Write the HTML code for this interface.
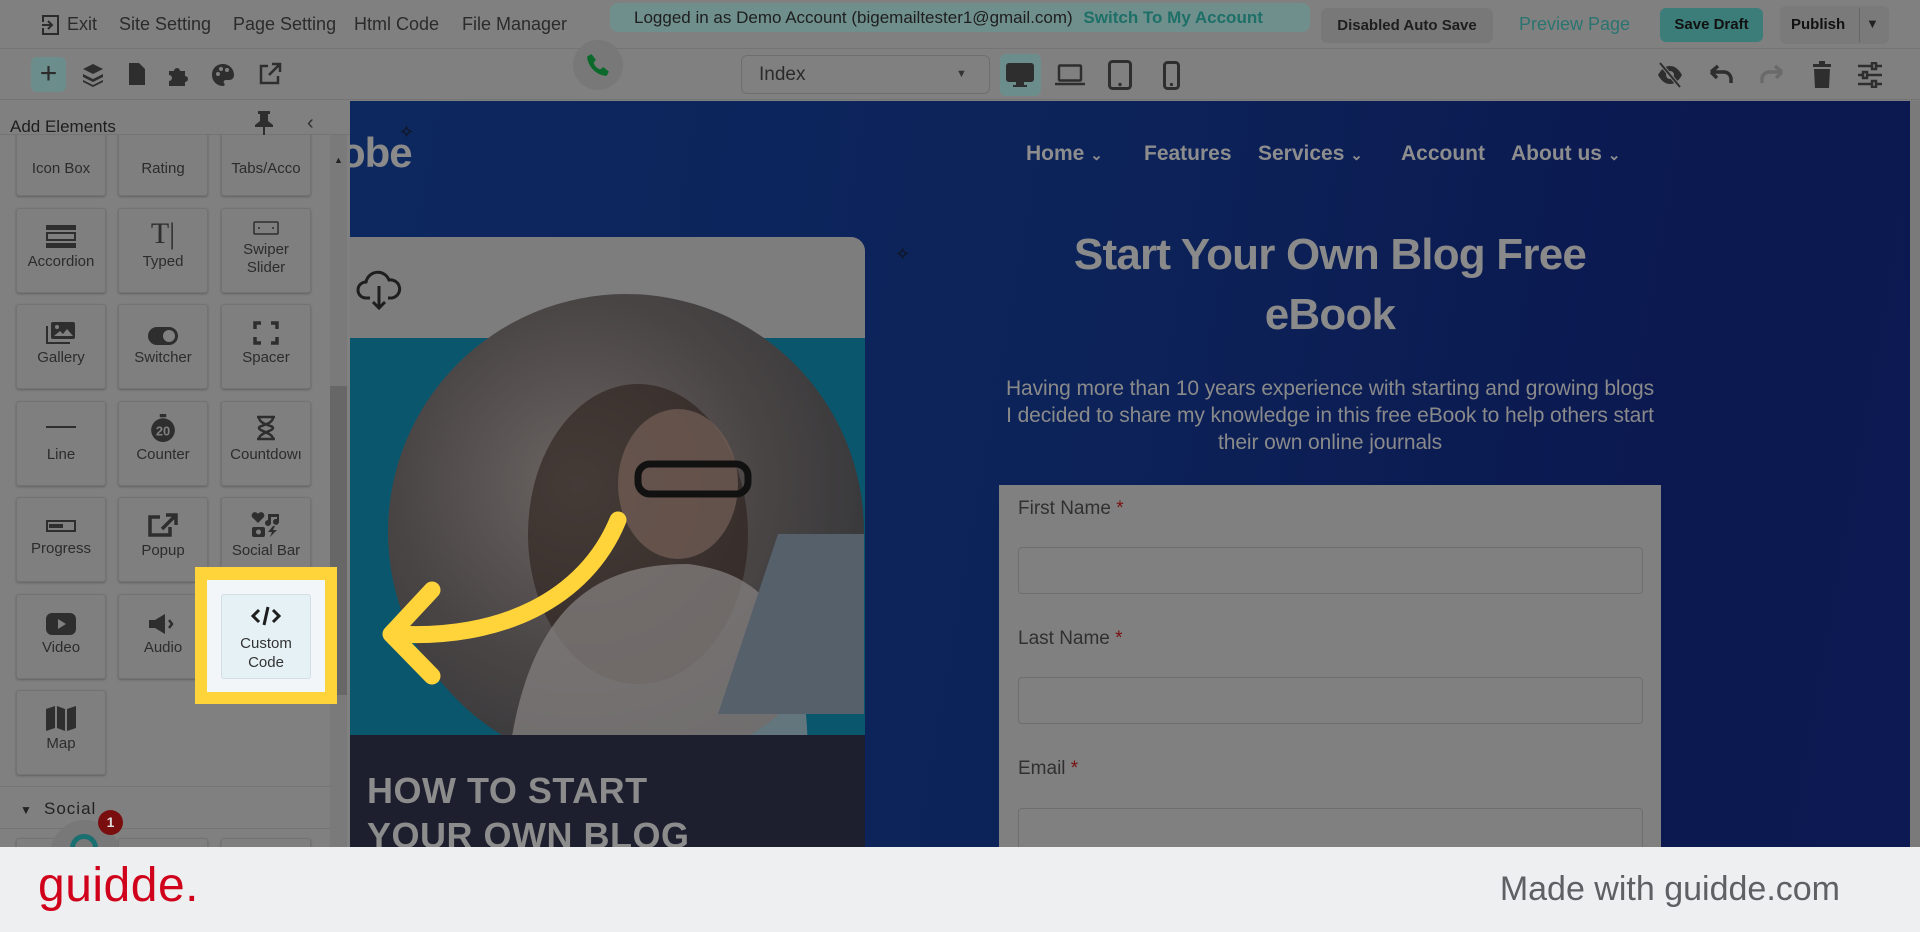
<!DOCTYPE html>
<html><head><meta charset="utf-8">
<style>
*{box-sizing:border-box;margin:0;padding:0}
body{width:1920px;height:932px;overflow:hidden;background:#808080;font-family:"Liberation Sans",sans-serif;position:relative}
.a{position:absolute}
.tb{color:#2b2b2b;font-size:18px;top:14px}
.tile{position:absolute;width:90px;height:85px;background:#7f7f7f;border:1px solid #737373;border-radius:3px;box-shadow:0 1px 2px rgba(0,0,0,.25);color:#2c2c2c;font-size:15px;text-align:center;line-height:18px}
.tile .ic{height:40px;display:flex;align-items:flex-end;justify-content:center;margin-bottom:4px}
.nav{top:142px;color:#8d8d8d;font-weight:bold;font-size:21px}
.lbl{color:#303030;font-size:19px;left:1018px}
.lbl b{color:#7a1010;font-weight:normal}
.inp{left:1018px;width:625px;height:47px;border:1px solid #6e6e6e;border-radius:4px}
</style></head><body>
<!-- top bar -->
<div class="a" style="left:0;top:0;width:1920px;height:49px;background:#808080;border-bottom:1px solid #747474"></div>
<svg class="a" style="left:41px;top:14px" width="20" height="22" viewBox="0 0 20 22"><path d="M2 8V2h15v18H2v-6M1 11h10M7 7l4 4-4 4" fill="none" stroke="#2b2b2b" stroke-width="2"/></svg>
<div class="a tb" style="left:67px">Exit</div>
<div class="a tb" style="left:119px">Site Setting</div>
<div class="a tb" style="left:233px">Page Setting</div>
<div class="a tb" style="left:354px">Html Code</div>
<div class="a tb" style="left:462px">File Manager</div>
<div class="a" style="left:610px;top:3px;width:700px;height:29px;background:#6f8f8c;border-radius:8px"></div>
<div class="a" style="left:634px;top:8px;font-size:17px;color:#1e1e1e">Logged in as Demo Account (bigemailtester1@gmail.com) <span style="color:#1d6f67;font-weight:bold;margin-left:6px">Switch To My Account</span></div>
<div class="a" style="left:1321px;top:8px;width:172px;height:35px;background:#787878;border-radius:6px;font-size:15px;font-weight:bold;color:#1e1e1e;text-align:center;line-height:35px">Disabled Auto Save</div>
<div class="a" style="left:1519px;top:14px;font-size:18px;color:#2a7470">Preview Page</div>
<div class="a" style="left:1660px;top:8px;width:103px;height:34px;background:#3c7d79;border-radius:6px;font-size:15px;font-weight:bold;color:#111;text-align:center;line-height:34px">Save Draft</div>
<div class="a" style="left:1780px;top:6px;width:109px;height:38px;background:#7a7a7a;border-radius:6px"></div>
<div class="a" style="left:1791px;top:16px;font-size:15px;font-weight:bold;color:#111">Publish</div>
<div class="a" style="left:1859px;top:8px;width:1px;height:34px;background:#666"></div>
<div class="a" style="left:1866px;top:16px;font-size:13px;color:#222">▼</div>
<!-- second bar -->
<div class="a" style="left:0;top:50px;width:1920px;height:50px;background:#808080;border-bottom:1px solid #747474"></div>
<div class="a" style="left:31px;top:57px;width:35px;height:35px;background:#6b8e8c;border-radius:6px;color:#2b2b2b;font-size:30px;text-align:center;line-height:33px">+</div>
<svg class="a" style="left:82px;top:63px" width="22" height="24" viewBox="0 0 22 24" fill="#2e2e2e"><path d="M11 1l10 5-10 5L1 6z"/><path d="M1 11l10 5 10-5v3l-10 5-10-5z"/><path d="M1 17l10 5 10-5v2l-10 5-10-5z"/></svg>
<svg class="a" style="left:129px;top:63px" width="16" height="22" viewBox="0 0 16 22" fill="#2e2e2e"><path d="M0 0h10l6 6v16H0z"/></svg>
<svg class="a" style="left:166px;top:63px" width="24" height="24" viewBox="0 0 24 24" fill="#2e2e2e"><path d="M3 8h5a3 3 0 1 1 6 0h5v5a3 3 0 1 1 0 6v4H3v-5a3 3 0 1 0 0-6z"/></svg>
<svg class="a" style="left:211px;top:63px" width="24" height="24" viewBox="0 0 24 24"><path d="M12 1C5 1 1 6 1 12s5 11 11 11c2 0 2-2 1-3s0-3 2-3h3c3 0 5-2 5-5C23 6 18 1 12 1z" fill="#2e2e2e"/><circle cx="7" cy="11" r="2" fill="#808080"/><circle cx="10" cy="6" r="2" fill="#808080"/><circle cx="16" cy="7" r="2" fill="#808080"/></svg>
<svg class="a" style="left:258px;top:62px" width="24" height="24" viewBox="0 0 24 24" fill="none" stroke="#2e2e2e" stroke-width="2.5"><path d="M10 4H3v17h17v-7M14 2h8v8M22 2L11 13"/></svg>
<div class="a" style="left:573px;top:40px;width:50px;height:50px;border-radius:50%;background:#787878"></div>
<svg class="a" style="left:585px;top:51px" width="26" height="28" viewBox="0 0 24 24"><path d="M6 2l4 5-2 3c1 3 3 5 6 6l3-2 5 4-2 4C11 22 2 13 2 4z" fill="#0b6a2b"/></svg>
<div class="a" style="left:741px;top:55px;width:249px;height:39px;border:1px solid #6e6e6e;border-radius:6px;background:#808080"></div>
<div class="a" style="left:759px;top:64px;font-size:19px;color:#2a2a2a">Index</div>
<div class="a" style="left:956px;top:68px;font-size:11px;color:#333">▼</div>
<div class="a" style="left:1000px;top:54px;width:41px;height:42px;background:#6b8e8c;border-radius:6px"></div>
<svg class="a" style="left:1006px;top:63px" width="28" height="25" viewBox="0 0 28 25" fill="#2e2e2e"><rect x="0" y="0" width="28" height="19" rx="3"/><rect x="10" y="19" width="8" height="3"/><rect x="7" y="22" width="14" height="2"/></svg>
<svg class="a" style="left:1055px;top:64px" width="30" height="22" viewBox="0 0 30 22" fill="none" stroke="#2e2e2e" stroke-width="2.5"><rect x="4" y="1.5" width="22" height="15" rx="1"/><path d="M0 20h30"/></svg>
<svg class="a" style="left:1108px;top:60px" width="24" height="30" viewBox="0 0 24 30"><rect x="1.5" y="1.5" width="21" height="27" rx="3" fill="none" stroke="#2e2e2e" stroke-width="3"/><circle cx="12" cy="24.5" r="1.7" fill="#2e2e2e"/></svg>
<svg class="a" style="left:1163px;top:61px" width="17" height="29" viewBox="0 0 17 29"><rect x="1.5" y="1.5" width="14" height="26" rx="3" fill="none" stroke="#2e2e2e" stroke-width="3"/><circle cx="8.5" cy="23.5" r="1.6" fill="#2e2e2e"/></svg>
<svg class="a" style="left:1656px;top:62px" width="28" height="26" viewBox="0 0 28 26"><path d="M2 13C6 6 10 4 14 4s8 2 12 9c-4 7-8 9-12 9S6 20 2 13z" fill="#2e2e2e"/><circle cx="14" cy="13" r="4" fill="#808080"/><path d="M4 1l20 24" stroke="#808080" stroke-width="4"/><path d="M4 1l20 24" stroke="#2e2e2e" stroke-width="2"/></svg>
<svg class="a" style="left:1708px;top:64px" width="26" height="20" viewBox="0 0 26 20" fill="none" stroke="#2e2e2e" stroke-width="3.5"><path d="M4 8h12a7 7 0 0 1 7 7v4M3 8l7-6M3 8l6 6"/></svg>
<svg class="a" style="left:1759px;top:64px" width="26" height="20" viewBox="0 0 26 20" fill="none" stroke="#6a6a6a" stroke-width="3.5"><path d="M22 8H10a7 7 0 0 0-7 7v4M23 8l-7-6M23 8l-6 6"/></svg>
<svg class="a" style="left:1813px;top:61px" width="18" height="27" viewBox="0 0 18 27" fill="#2e2e2e"><rect x="0" y="3" width="18" height="3"/><rect x="6" y="0" width="6" height="3"/><path d="M1 8h16l-1 19H2z"/></svg>
<svg class="a" style="left:1858px;top:62px" width="24" height="26" viewBox="0 0 24 26" fill="none" stroke="#2e2e2e" stroke-width="2.5"><path d="M0 4h24M0 13h24M0 22h24"/><rect x="14" y="1" width="4" height="6" fill="#808080"/><rect x="5" y="10" width="4" height="6" fill="#808080"/><rect x="14" y="19" width="4" height="6" fill="#808080"/></svg>
<!-- canvas -->
<div class="a" style="left:350px;top:101px;width:1560px;height:746px;background:linear-gradient(100deg,#0d285f 0%,#0c2359 45%,#0b1950 80%,#0c1952 100%)"></div>
<div class="a" style="left:1910px;top:101px;width:10px;height:746px;background:#7a7a7a"></div>
<div class="a" style="left:342px;top:128px;font-size:42px;font-weight:bold;color:#8a8a8a;letter-spacing:-1px;overflow:hidden;width:90px;height:50px;line-height:50px"><span style="margin-left:-2px">obe</span></div>
<div class="a" style="left:399px;top:122px;font-size:18px;color:#111">✧</div>
<div class="a nav" style="left:1026px">Home <span style="font-size:15px">⌄</span></div>
<div class="a nav" style="left:1144px">Features</div>
<div class="a nav" style="left:1258px">Services <span style="font-size:15px">⌄</span></div>
<div class="a nav" style="left:1401px">Account</div>
<div class="a nav" style="left:1511px">About us <span style="font-size:15px">⌄</span></div>
<div class="a" style="left:1010px;top:225px;width:640px;text-align:center;font-size:44px;font-weight:bold;line-height:60px;color:#8a8a8a;letter-spacing:-.8px">Start Your Own Blog Free<br>eBook</div>
<div class="a" style="left:930px;top:375px;width:800px;text-align:center;font-size:21px;line-height:27px;color:#8a8a8a;letter-spacing:-.1px;white-space:nowrap">Having more than 10 years experience with starting and growing blogs<br>I decided to share my knowledge in this free eBook to help others start<br>their own online journals</div>
<div class="a" style="left:895px;top:244px;font-size:18px;color:#111">✧</div>
<div class="a" style="left:999px;top:485px;width:662px;height:362px;background:#808080"></div>
<div class="a lbl" style="top:498px">First Name <b>*</b></div>
<div class="a inp" style="top:547px"></div>
<div class="a lbl" style="top:628px">Last Name <b>*</b></div>
<div class="a inp" style="top:677px"></div>
<div class="a lbl" style="top:758px">Email <b>*</b></div>
<div class="a inp" style="top:808px;height:60px"></div>
<!-- card -->
<div class="a" style="left:350px;top:237px;width:515px;height:610px;border-top-right-radius:14px;overflow:hidden">
 <div class="a" style="left:0;top:0;width:515px;height:101px;background:#7d7d7d"></div>
 <div class="a" style="left:0;top:101px;width:515px;height:400px;background:#0a566c"></div>
 <div class="a" style="left:38px;top:57px;width:476px;height:476px;border-radius:50%;background:radial-gradient(circle at 40% 40%,#6a6462 0%,#4a4545 45%,#3a3a3c 70%,#2c3036 100%)"></div>
 <div class="a" style="left:0;top:498px;width:515px;height:120px;background:#1d1f2e"></div>
 <div class="a" style="left:17px;top:531px;font-size:36px;font-weight:900;color:#8c8c8c;line-height:45px;letter-spacing:.5px">HOW TO START<br>YOUR OWN BLOG</div>
</div>
<svg class="a" style="left:356px;top:268px" width="46" height="44" viewBox="0 0 46 44" fill="none" stroke="#1e1e1e" stroke-width="3"><path d="M14 30H10a8 8 0 0 1 0-16 12 12 0 0 1 23-2 9 9 0 0 1 3 18h-4M23 18v22M17 34l6 6 6-6"/></svg>
<svg class="a" style="left:388px;top:294px" width="476" height="441" viewBox="0 0 476 441"><ellipse cx="250" cy="240" rx="110" ry="150" fill="#2b1f1a" opacity=".6"/><ellipse cx="290" cy="190" rx="60" ry="75" fill="#6e5a52" opacity=".8"/><path d="M120 470 C140 300 220 270 300 270 C380 280 420 330 420 470z" fill="#898585" opacity=".7"/><path d="M330 420 L390 240 L476 240 L476 420z" fill="#56606a"/><rect x="250" y="170" width="110" height="30" rx="12" fill="none" stroke="#111" stroke-width="7"/></svg>
<!-- left panel -->
<div class="a" style="left:0;top:101px;width:350px;height:746px;background:#808080"></div>
<div class="a" style="left:0;top:101px;width:350px;height:34px;border-bottom:1px solid #747474"></div>
<div class="a" style="left:10px;top:117px;font-size:17px;color:#1e1e1e">Add Elements</div>
<svg class="a" style="left:254px;top:111px" width="20" height="24" viewBox="0 0 20 24" fill="#2e2e2e"><path d="M4 0h12v3h-2v7l5 4v2H1v-2l5-4V3H4z"/><rect x="9" y="16" width="2" height="8"/></svg>
<div class="a" style="left:307px;top:112px;font-size:20px;color:#2e2e2e">&lsaquo;</div>
<div class="a" style="left:330px;top:135px;width:17px;height:712px;background:#7a7a7a"></div>
<div class="a" style="left:330px;top:386px;width:17px;height:309px;background:#676767"></div>
<div class="a" style="left:334px;top:155px;font-size:9px;color:#222">▲</div>
<div class="a" style="left:0;top:135px;width:330px;height:712px;overflow:hidden">
 <div class="tile" style="left:16px;top:-24px;padding-top:48px">Icon Box</div>
 <div class="tile" style="left:118px;top:-24px;padding-top:48px">Rating</div>
 <div class="tile" style="left:221px;top:-24px;padding-top:48px">Tabs/Acco</div>
 <div class="tile" style="left:16px;top:73px"><div class="ic"><svg width="30" height="24" viewBox="0 0 30 24" fill="#2e2e2e"><rect width="30" height="5"/><rect x="1" y="8" width="28" height="7" fill="none" stroke="#2e2e2e" stroke-width="2"/><rect y="18" width="30" height="5"/></svg></div>Accordion</div>
 <div class="tile" style="left:118px;top:73px"><div class="ic" style="font-family:'Liberation Serif';font-size:30px;line-height:30px;color:#2e2e2e">T|</div>Typed</div>
 <div class="tile" style="left:221px;top:73px;line-height:18px"><div class="ic" style="height:26px;margin-bottom:6px"><svg width="26" height="14" viewBox="0 0 26 14"><rect x="1" y="1" width="24" height="12" rx="1" fill="none" stroke="#2e2e2e" stroke-width="1.5"/><circle cx="6" cy="7" r="1" fill="#2e2e2e"/><circle cx="20" cy="7" r="1" fill="#2e2e2e"/></svg></div>Swiper<br>Slider</div>
 <div class="tile" style="left:16px;top:169px"><div class="ic"><svg width="30" height="24" viewBox="0 0 30 24"><rect x="5" y="1" width="24" height="17" rx="2" fill="#2e2e2e"/><path d="M1 5v17h23" fill="none" stroke="#2e2e2e" stroke-width="2"/><circle cx="11" cy="6" r="2" fill="#808080"/><path d="M8 15l6-5 3 3 4-5 6 7z" fill="#808080"/></svg></div>Gallery</div>
 <div class="tile" style="left:118px;top:169px"><div class="ic"><svg width="30" height="18" viewBox="0 0 30 18"><rect width="30" height="18" rx="9" fill="#2e2e2e"/><circle cx="21" cy="9" r="6" fill="#808080"/></svg></div>Switcher</div>
 <div class="tile" style="left:221px;top:169px"><div class="ic"><svg width="26" height="24" viewBox="0 0 26 24" fill="none" stroke="#2e2e2e" stroke-width="3.5"><path d="M2 8V2h6M18 2h6v6M24 16v6h-6M8 22H2v-6"/></svg></div>Spacer</div>
 <div class="tile" style="left:16px;top:266px"><div class="ic" style="height:38px;margin-bottom:6px"><div style="width:30px;height:2px;background:#2e2e2e;margin-bottom:12px"></div></div>Line</div>
 <div class="tile" style="left:118px;top:266px"><div class="ic"><svg width="28" height="28" viewBox="0 0 26 26"><rect x="10" y="0" width="6" height="3" fill="#2e2e2e"/><circle cx="13" cy="15" r="11" fill="#2e2e2e"/><text x="13" y="20" font-size="12" font-weight="bold" text-anchor="middle" fill="#808080" font-family="Liberation Sans">20</text></svg></div>Counter</div>
 <div class="tile" style="left:221px;top:266px"><div class="ic"><svg width="20" height="28" viewBox="0 0 20 26" fill="none" stroke="#2e2e2e" stroke-width="2.5"><path d="M1 2h18M1 24h18M3 2c0 8 14 8 14 11S3 18 3 24M17 2c0 8-14 8-14 11s14 5 14 11"/></svg></div>Countdowı</div>
 <div class="tile" style="left:16px;top:362px"><div class="ic" style="height:34px;margin-bottom:8px"><svg width="30" height="12" viewBox="0 0 30 12"><rect x="1" y="1" width="28" height="10" fill="none" stroke="#2e2e2e" stroke-width="2"/><rect x="3" y="4" width="14" height="4" fill="#2e2e2e"/></svg></div>Progress</div>
 <div class="tile" style="left:118px;top:362px"><div class="ic"><svg width="30" height="26" viewBox="0 0 30 24" fill="none" stroke="#2e2e2e" stroke-width="3.5"><path d="M12 4H2v18h20V14M18 2h10v10M28 2L14 16"/></svg></div>Popup</div>
 <div class="tile" style="left:221px;top:362px"><div class="ic"><svg width="30" height="26" viewBox="0 0 30 24" fill="#2e2e2e"><path d="M7 10L1 4a3 3 0 0 1 6-3 3 3 0 0 1 6 3z"/><path d="M17 1h11v8a3 3 0 1 1-2-3V4h-6v6a3 3 0 1 1-3-3z"/><rect x="1" y="14" width="13" height="10" rx="2"/><circle cx="7.5" cy="19" r="2.5" fill="#808080"/><path d="M22 13l-5 6h4l-2 5 7-7h-4l2-4z"/></svg></div>Social Bar</div>
 <div class="tile" style="left:16px;top:459px"><div class="ic"><svg width="30" height="22" viewBox="0 0 30 22"><rect width="30" height="22" rx="6" fill="#2e2e2e"/><path d="M12 6l8 5-8 5z" fill="#808080"/></svg></div>Video</div>
 <div class="tile" style="left:118px;top:459px"><div class="ic"><svg width="30" height="22" viewBox="0 0 30 22" fill="#2e2e2e"><path d="M1 7h6l10-6v20L7 15H1z"/><path d="M21 7l3 4-3 4" fill="none" stroke="#2e2e2e" stroke-width="2.5"/></svg></div>Audio</div>
 <div class="tile" style="left:16px;top:555px"><div class="ic"><svg width="32" height="26" viewBox="0 0 32 26" fill="#2e2e2e"><path d="M1 4l9-3v22l-9 3zM12 1l8 3v22l-8-3zM22 4l9-3v22l-9 3z"/></svg></div>Map</div>
 <div class="a" style="left:0;top:651px;width:330px;height:1px;background:#747474"></div>
 <div class="a" style="left:20px;top:660px;font-size:12px;color:#222;line-height:30px">▼</div>
 <div class="a" style="left:44px;top:659px;font-size:17px;color:#222;line-height:30px;letter-spacing:1px">Social</div>
 <div class="a" style="left:0;top:693px;width:330px;height:1px;background:#747474"></div>
 <div class="tile" style="left:16px;top:703px;height:40px"></div>
 <div class="tile" style="left:118px;top:703px;height:40px"></div>
 <div class="tile" style="left:221px;top:703px;height:40px"></div>
</div>
<div class="a" style="left:50px;top:820px;width:70px;height:70px;border-radius:50%;background:#787878"></div>
<div class="a" style="left:70px;top:834px;width:28px;height:28px;border:5px solid #1a6f70;border-radius:50%"></div>
<div class="a" style="left:98px;top:810px;width:25px;height:25px;border-radius:50%;background:#7a0d0d;color:#ddd;font-size:14px;font-weight:bold;text-align:center;line-height:25px">1</div>
<!-- highlight -->
<div class="a" style="left:195px;top:567px;width:142px;height:137px;background:#ffd43b"></div>
<div class="a" style="left:207px;top:580px;width:118px;height:112px;background:#f2f6f8"></div>
<div class="a" style="left:221px;top:594px;width:90px;height:85px;background:#e6f1f6;border:1px solid #d2dfe5;border-radius:3px;text-align:center;color:#333;font-size:15px;line-height:19px">
<svg style="margin-top:10px" width="30" height="22" viewBox="0 0 30 20" fill="none" stroke="#1e1e1e" stroke-width="3"><path d="M8 4L2 10l6 6M22 4l6 6-6 6M17 1l-4 18"/></svg><div style="margin-top:2px">Custom<br>Code</div></div>
<!-- arrow -->
<svg class="a" style="left:370px;top:500px" width="270" height="200" viewBox="370 500 270 200" fill="none" stroke="#ffd43b" stroke-width="17" stroke-linecap="round" stroke-linejoin="round"><path d="M618 520C585 600 500 640 395 634"/><path d="M432 590L391 634 432 676"/></svg>
<!-- bottom -->
<div class="a" style="left:0;top:847px;width:1920px;height:85px;background:#eeeff1"></div>
<div class="a" style="left:38px;top:858px;font-size:48px;color:#d0021b;letter-spacing:.5px">guidde.</div>
<div class="a" style="right:80px;top:870px;font-size:34px;color:#5f6063">Made with guidde.com</div>
</body></html>
